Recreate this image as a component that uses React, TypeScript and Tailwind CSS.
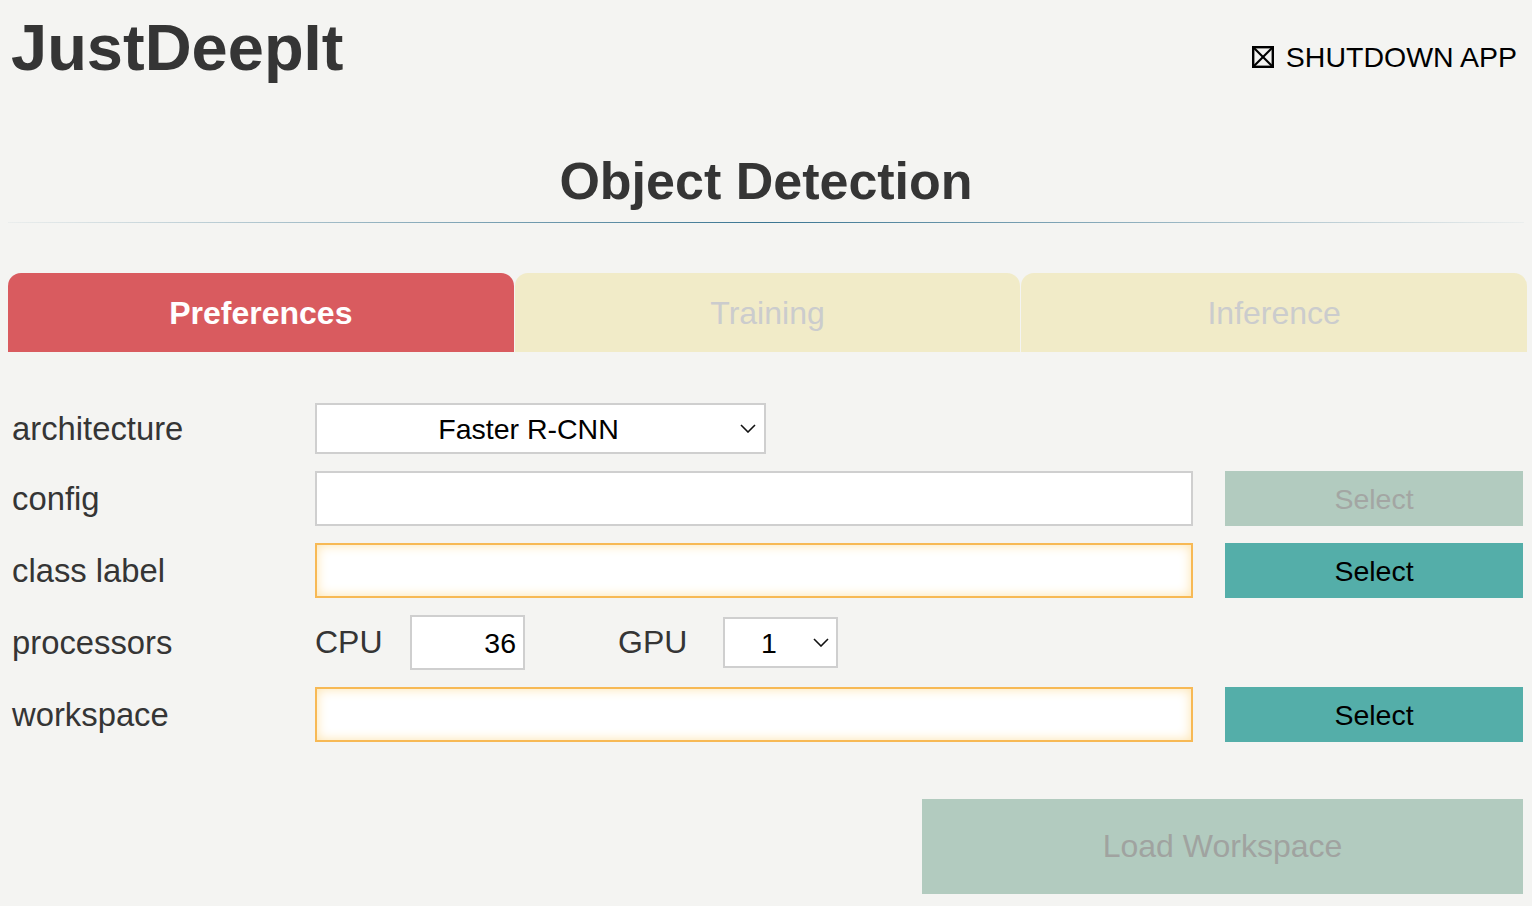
import React from "react";

function Chevron() {
  return (
    <svg width="16" height="9" viewBox="0 0 16 9" fill="none" className="shrink-0">
      <polyline points="1,1 8,8 15,1" stroke="#111" strokeWidth="1.6" fill="none" />
    </svg>
  );
}

function Label({ children }: { children: React.ReactNode }) {
  return (
    <div className="w-[303px] shrink-0 text-[32.8px] leading-[32px] text-[#353535]">{children}</div>
  );
}

function TextBox({ warn }: { warn?: boolean }) {
  return warn ? (
    <div className="w-[878px] h-[55px] shrink-0 bg-white border-2 border-[#f7b955] shadow-[inset_0_0_12px_#fde3ad]" />
  ) : (
    <div className="w-[878px] h-[55px] shrink-0 bg-white border-2 border-[#cfcfcf]" />
  );
}

function SelectBtn({ disabled }: { disabled?: boolean }) {
  return disabled ? (
    <div className="ml-[32px] w-[298px] h-[55px] shrink-0 bg-[#b2cbbf] flex items-center justify-center text-[28.5px] leading-[28px] text-[#a3a6a3]">
      Select
    </div>
  ) : (
    <div className="ml-[32px] w-[298px] h-[55px] shrink-0 bg-[#54aea9] flex items-center justify-center text-[28.5px] leading-[28px] text-black">
      Select
    </div>
  );
}

export default function App() {
  return (
    <div className="min-h-screen w-full bg-[#f4f4f2] font-['Liberation_Sans',Arial,sans-serif]">
      {/* header */}
      <div className="flex items-start justify-between h-[120px]">
        <h1 className="ml-[11px] mt-[16px] text-[65px] leading-[64px] font-bold text-[#353535]">JustDeepIt</h1>
        <div className="mt-[43px] mr-[15px] flex items-center gap-[12px] text-[28.5px] leading-[28px] text-black">
          <svg width="22" height="22" viewBox="0 0 22 22" fill="none">
            <rect x="1.2" y="1.2" width="19.6" height="19.6" stroke="#000" strokeWidth="2.4" />
            <line x1="2" y1="2" x2="20" y2="20" stroke="#000" strokeWidth="2.2" />
            <line x1="20" y1="2" x2="2" y2="20" stroke="#000" strokeWidth="2.2" />
          </svg>
          <span>SHUTDOWN APP</span>
        </div>
      </div>

      <h2 className="mt-[35px] text-center text-[52px] leading-[52px] font-bold text-[#353535]">Object Detection</h2>
      <div className="mt-[15px] mx-[8px] h-px bg-[linear-gradient(to_right,rgba(58,117,146,0.05),#3a7592,rgba(58,117,146,0.05))]" />

      {/* tabs */}
      <div className="mt-[50px] ml-[8px] mr-[5px] h-[79px] flex gap-[1px]">
        <div className="flex-1 rounded-t-[13px] bg-[#d95b5f] flex items-center justify-center text-[32px] leading-[32px] font-bold text-white">
          Preferences
        </div>
        <div className="flex-1 rounded-t-[13px] bg-[#f1ebc8] flex items-center justify-center text-[32px] leading-[32px] text-[#cbcccd]">
          Training
        </div>
        <div className="flex-1 rounded-t-[13px] bg-[#f1ebc8] flex items-center justify-center text-[32px] leading-[32px] text-[#cbcccd]">
          Inference
        </div>
      </div>

      {/* form */}
      <div className="mt-[51px] pl-[12px] flex flex-col gap-[17px]">
        <div className="h-[51px] flex items-center">
          <Label>architecture</Label>
          <div className="w-[451px] h-[51px] bg-white border-2 border-[#cfcfcf] flex items-center pr-[8px]">
            <div className="flex-1 text-center text-[28.5px] leading-[28px] text-black">Faster R-CNN</div>
            <Chevron />
          </div>
        </div>
        <div className="h-[55px] flex items-center">
          <Label>config</Label>
          <TextBox />
          <SelectBtn disabled />
        </div>
        <div className="h-[55px] flex items-center">
          <Label>class label</Label>
          <TextBox warn />
          <SelectBtn />
        </div>
        <div className="h-[55px] flex items-center">
          <Label>processors</Label>
          <div className="w-[95px] shrink-0 text-[32px] leading-[31px] text-[#353535]">CPU</div>
          <div className="w-[115px] h-[55px] shrink-0 bg-white border-2 border-[#cfcfcf] flex items-center justify-end pr-[7px] text-[28.5px] leading-[28px] text-black">
            36
          </div>
          <div className="ml-[93px] w-[105px] shrink-0 text-[32px] leading-[31px] text-[#353535]">GPU</div>
          <div className="w-[115px] h-[51px] shrink-0 bg-white border-2 border-[#cfcfcf] flex items-center pr-[7px]">
            <div className="flex-1 text-center text-[28.5px] leading-[28px] text-black">1</div>
            <Chevron />
          </div>
        </div>
        <div className="h-[55px] flex items-center">
          <Label>workspace</Label>
          <TextBox warn />
          <SelectBtn />
        </div>
      </div>

      <div className="mt-[57px] flex justify-end pr-[9px]">
        <div className="w-[601px] h-[95px] bg-[#b2cbbf] flex items-center justify-center text-[32px] leading-[31px] text-[#a0a3a0]">
          Load Workspace
        </div>
      </div>
    </div>
  );
}
